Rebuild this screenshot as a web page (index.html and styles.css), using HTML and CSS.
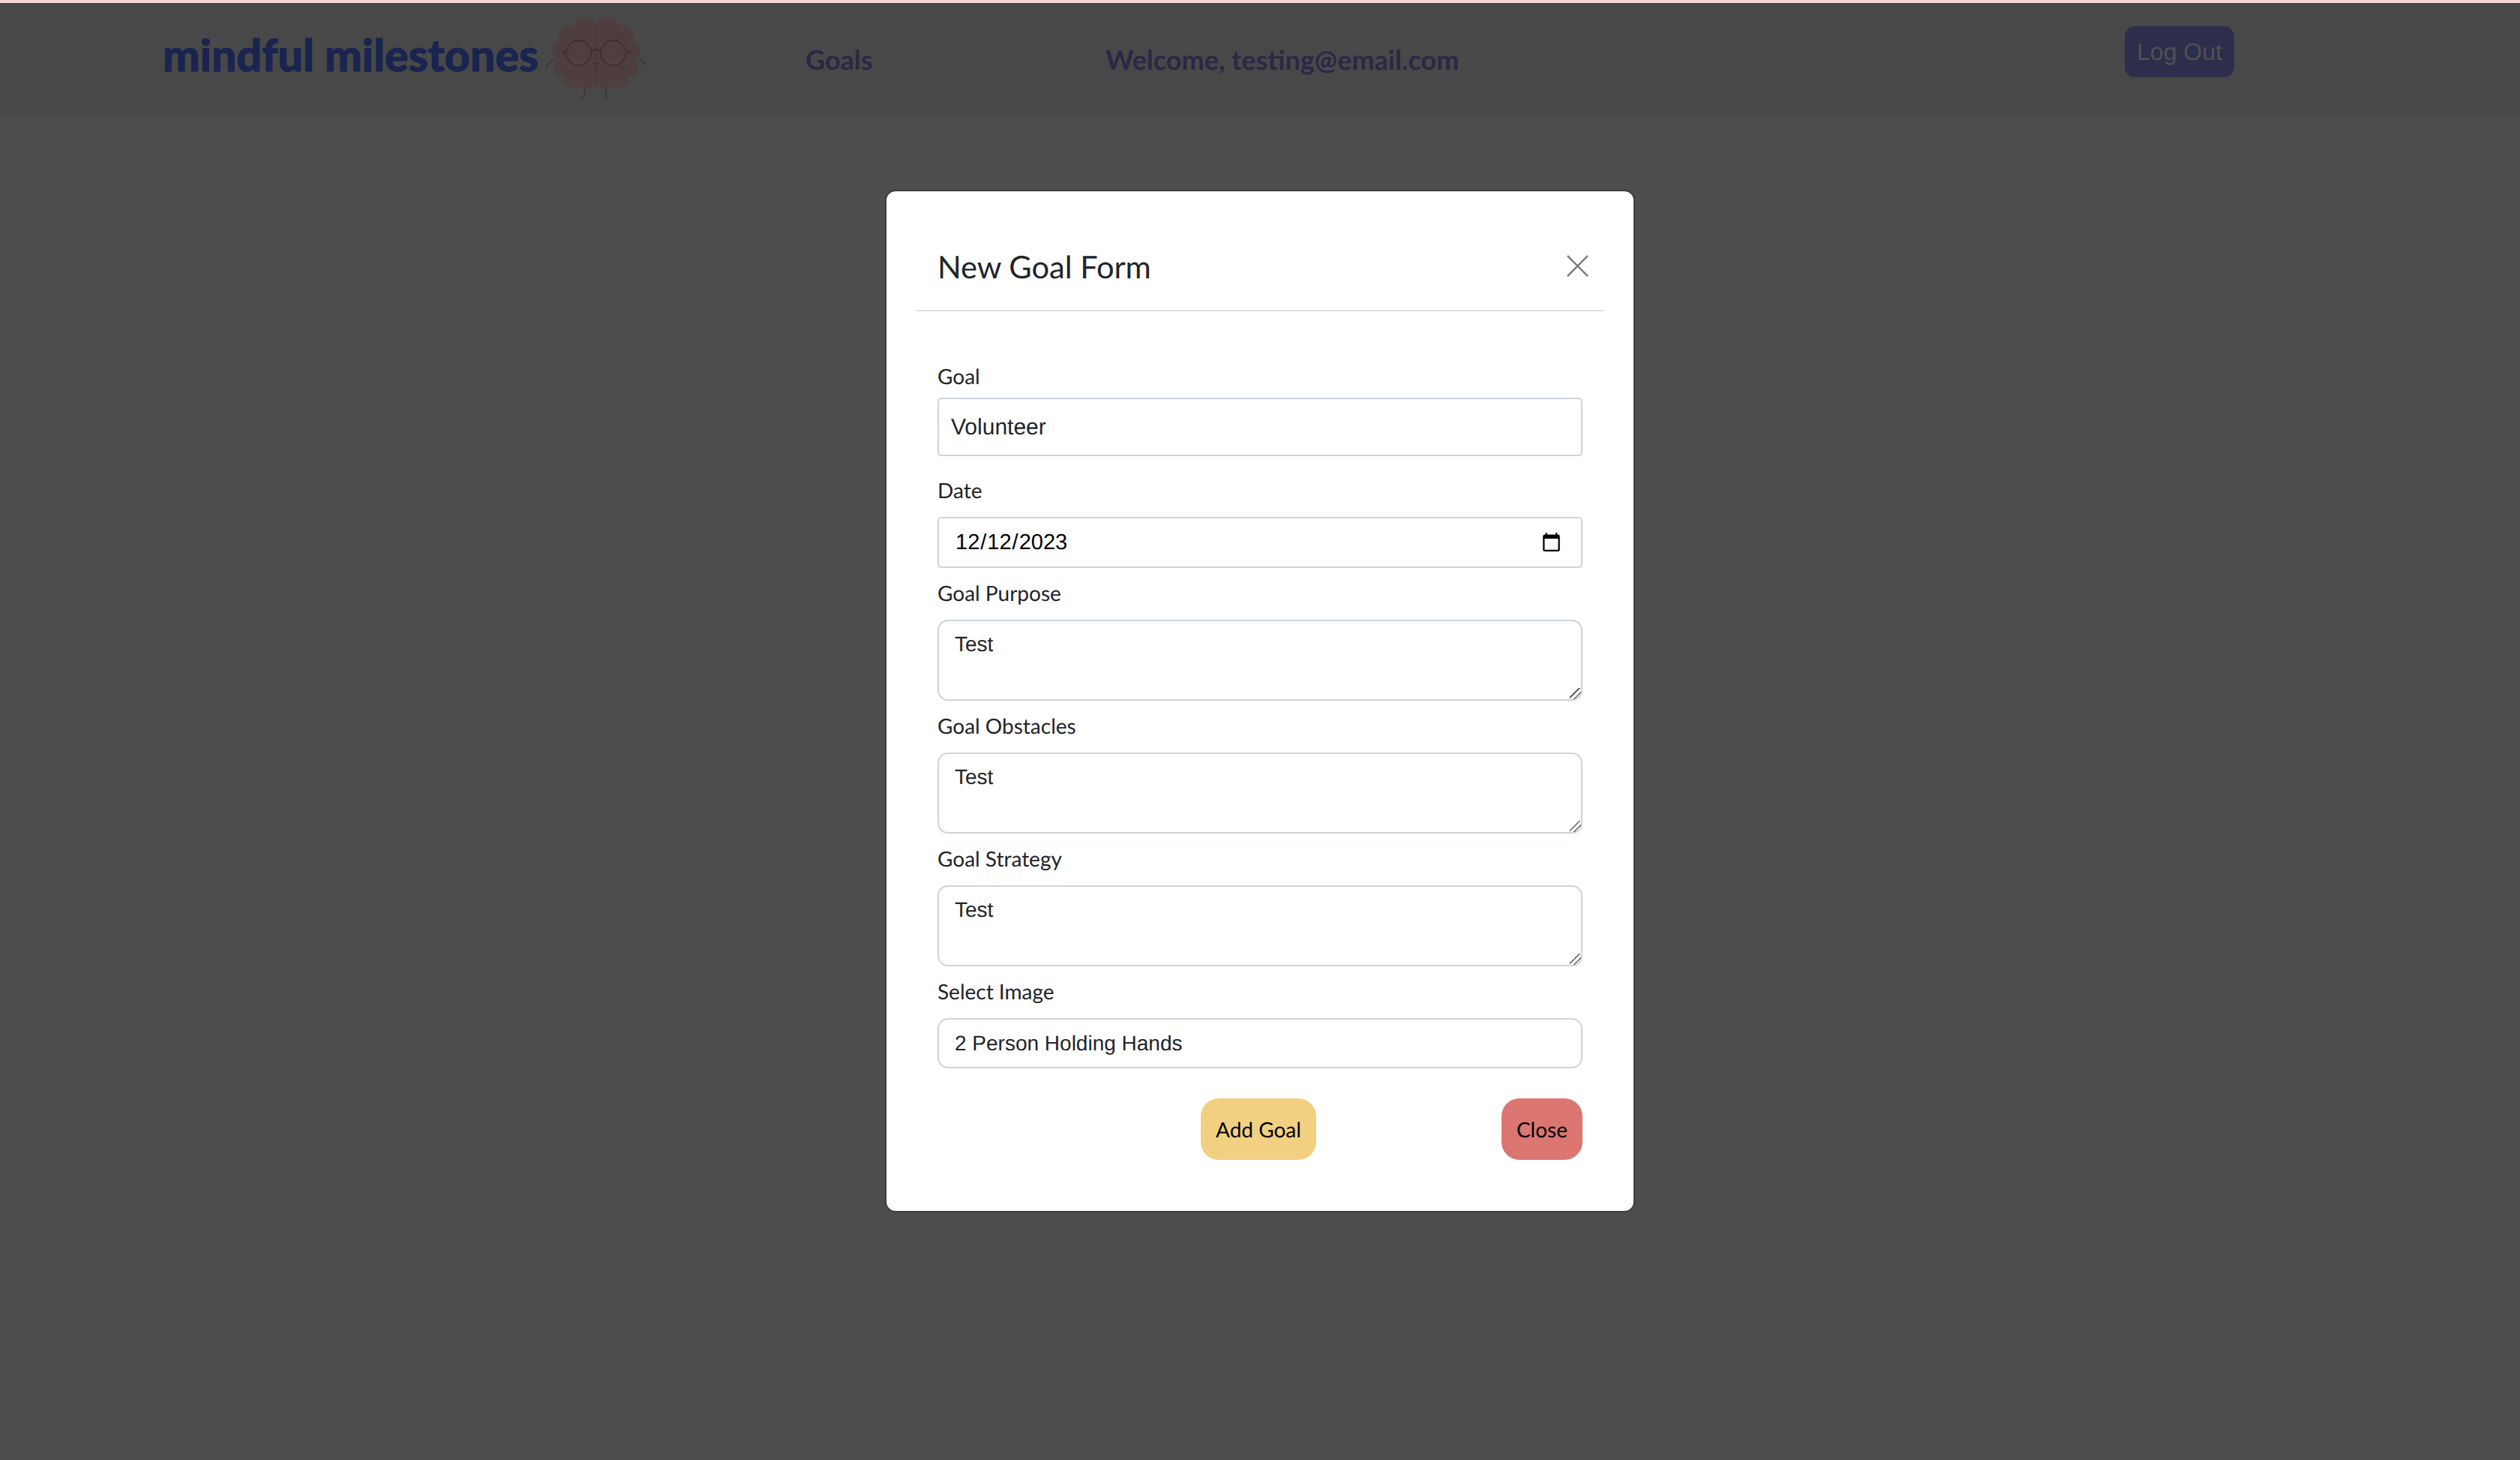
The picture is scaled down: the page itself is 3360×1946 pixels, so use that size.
FILE: index.html
```html
<!DOCTYPE html>
<html>
  <head>
    <meta name="viewport" content="width=device-width,initial-scale=1.0">
    <title>Mindful Milestones - New Goal</title>
    <link rel="stylesheet" href="styles.css">
  </head>
  <body>
    <div class="top-strip"></div>
    <nav class="navbar">
      <span class="logo-text">mindful milestones</span>
      <svg class="logo-brain" viewBox="0 0 510 405" aria-hidden="true">
        <g fill="#4e3e3f">
          <circle cx="208" cy="100" r="48"/>
          <circle cx="300" cy="100" r="48"/>
          <circle cx="150" cy="132" r="44"/>
          <circle cx="358" cy="132" r="44"/>
          <circle cx="124" cy="190" r="43"/>
          <circle cx="384" cy="190" r="43"/>
          <circle cx="130" cy="250" r="44"/>
          <circle cx="378" cy="250" r="44"/>
          <circle cx="168" cy="292" r="44"/>
          <circle cx="340" cy="292" r="44"/>
          <circle cx="220" cy="298" r="40"/>
          <circle cx="288" cy="298" r="40"/>
          <rect x="150" y="110" width="208" height="200"/>
        </g>
        <g fill="none" stroke="#45323a" stroke-width="3">
          <path d="M254 78V335"/>
          <path d="M186 122C192 104 214 104 224 124"/>
          <path d="M330 126C345 108 368 122 358 138C376 136 384 152 372 160"/>
          <path d="M158 268C152 298 180 304 194 288C200 304 222 302 230 286"/>
          <path d="M330 284C346 290 360 276 352 254"/>
        </g>
        <g fill="none" stroke="#3f2e33" stroke-width="3.5">
          <path d="M90 220C70 226 58 244 55 264"/>
          <path d="M418 216C436 222 448 234 455 248"/>
          <path d="M208 336V368C208 374 200 376 194 376"/>
          <path d="M294 336V368C294 374 302 376 308 376"/>
        </g>
        <g fill="#553f42">
          <ellipse cx="182" cy="232" rx="28" ry="14"/>
          <ellipse cx="322" cy="232" rx="28" ry="14"/>
          <circle cx="186" cy="197" r="10"/>
          <circle cx="320" cy="197" r="10"/>
        </g>
        <g fill="none" stroke="#3c2a31" stroke-width="4">
          <circle cx="185" cy="197" r="50"/>
          <circle cx="323" cy="197" r="50"/>
          <path d="M236 197C240 178 266 178 272 197"/>
          <path d="M240 236C246 244 260 244 266 236"/>
        </g>
        <g fill="#3c2a31">
          <circle cx="125" cy="195" r="6"/>
          <circle cx="385" cy="195" r="6"/>
        </g>
      </svg>
      <a class="nav-link nav-goals">Goals</a>
      <span class="nav-link nav-welcome">Welcome, testing@email.com</span>
      <button class="logout-button">Log Out</button>
    </nav>

    <main class="modal-wrap">
      <div class="modal">
        <div class="modal-header">
          <h5 class="modal-title">New Goal Form</h5>
          <svg class="close-icon" viewBox="0 0 30 30" aria-hidden="true">
            <path d="M1 1L29 29M29 1L1 29"/>
          </svg>
        </div>
        <form class="modal-body">
          <label class="form-label label-first" for="goal">Goal</label>
          <input id="goal" class="goal-input" type="text" value="Volunteer">

          <label class="form-label" for="date">Date</label>
          <input id="date" class="date-input" type="date" value="2023-12-12">

          <label class="form-label" for="purpose">Goal Purpose</label>
          <textarea id="purpose" class="goal-textarea">Test</textarea>

          <label class="form-label" for="obstacles">Goal Obstacles</label>
          <textarea id="obstacles" class="goal-textarea">Test</textarea>

          <label class="form-label" for="strategy">Goal Strategy</label>
          <textarea id="strategy" class="goal-textarea">Test</textarea>

          <label class="form-label" for="image">Select Image</label>
          <select id="image" class="image-select">
            <option>2 Person Holding Hands</option>
          </select>

          <div class="form-actions">
            <button type="button" class="action-button add-button">Add Goal</button>
            <button type="button" class="action-button close-button">Close</button>
          </div>
        </form>
      </div>
    </main>
  </body>
</html>
```

FILE: styles.css
```css
* {
  box-sizing: border-box;
  text-rendering: geometricPrecision;
}

html,
body {
  margin: 0;
  padding: 0;
}

body {
  min-height: 100vh;
  background-color: #4d4d4d;
  font-family: 'Lato', sans-serif;
  color: #212529;
}

.top-strip {
  height: 4px;
  background-color: #f5d5da;
}

.navbar {
  display: flex;
  align-items: center;
  height: 149px;
  padding-left: 217px;
  background-color: #484848;
}

.logo-text {
  width: 493px;
  margin-bottom: 12px;
  font-size: 59px;
  font-weight: 900;
  color: #1a2450;
  white-space: nowrap;
  -webkit-text-stroke: 1px #1a2450;
}

.logo-brain {
  width: 170px;
  height: 135px;
  align-self: flex-start;
  margin-top: 1px;
  flex-shrink: 0;
}

.nav-link {
  font-size: 36px;
  font-weight: 700;
  color: #2c2745;
  white-space: nowrap;
}

.nav-goals {
  margin-left: 194px;
  width: 400px;
}

.nav-welcome {
  width: 1359px;
}

.logout-button {
  align-self: flex-start;
  width: 146px;
  height: 68px;
  margin-top: 31px;
  padding: 0;
  border: none;
  border-radius: 14px;
  background-color: #2d2d4c;
  color: #515151;
  font-family: 'Liberation Sans', sans-serif;
  font-size: 32px;
}

.modal-wrap {
  display: flex;
  justify-content: center;
  padding-top: 100px;
}

.modal {
  width: 1000px;
  background-color: #fff;
  background-clip: padding-box;
  border: 2px solid rgba(0, 0, 0, 0.2);
  border-radius: 14px;
}

.modal-header {
  display: flex;
  align-items: center;
  justify-content: space-between;
  height: 160px;
  margin: 0 40px;
  padding: 41px 20px 0 28px;
  border-bottom: 2px solid #dee2e6;
}

.modal-title {
  margin: 0;
  font-size: 41.6px;
  font-weight: 400;
}

.close-icon {
  width: 29px;
  height: 29px;
  fill: none;
  stroke: #7a7a7a;
  stroke-width: 2.5;
}

.modal-body {
  display: flex;
  flex-direction: column;
  padding: 64px 68px 68px;
}

.form-label {
  display: block;
  padding-top: 11px;
  margin-bottom: 14px;
  font-size: 28px;
  line-height: 44px;
}

.label-first {
  padding-top: 0;
  margin-bottom: 7px;
}

.goal-input,
.date-input,
.goal-textarea,
.image-select {
  display: block;
  width: 100%;
  border: 2px solid #ced4da;
  background-color: #fff;
  color: #212529;
  font-family: 'Liberation Sans', sans-serif;
  text-rendering: geometricPrecision;
  outline: none;
}

.goal-input {
  height: 78px;
  margin-bottom: 12px;
  padding: 2px 16px 0;
  border-radius: 5px;
  font-size: 30px;
}

.date-input {
  height: 68px;
  padding: 0 23px 0 21px;
  border-radius: 5px;
  font-size: 29px;
  color: #000;
}

.goal-textarea {
  height: 108px;
  padding: 14px 21px;
  border-radius: 14px;
  font-size: 28px;
  line-height: 1.2;
}

.goal-textarea::-webkit-resizer {
  background: linear-gradient(135deg, transparent 40%, #666 40% 47%, transparent 47% 65%, #666 65% 72%, transparent 72%);
}

.image-select {
  height: 67px;
  padding: 0 21px;
  border-radius: 14px;
  font-size: 28px;
  appearance: none;
}

.form-actions {
  display: flex;
  justify-content: flex-end;
  gap: 247px;
  margin-top: 40px;
}

.action-button {
  height: 82px;
  padding: 0 20px;
  border: none;
  border-radius: 24px;
  color: #000;
  font-family: 'Lato', sans-serif;
  font-size: 28px;
}

.add-button {
  background-color: #f2d082;
}

.close-button {
  background-color: #db7670;
}
```
